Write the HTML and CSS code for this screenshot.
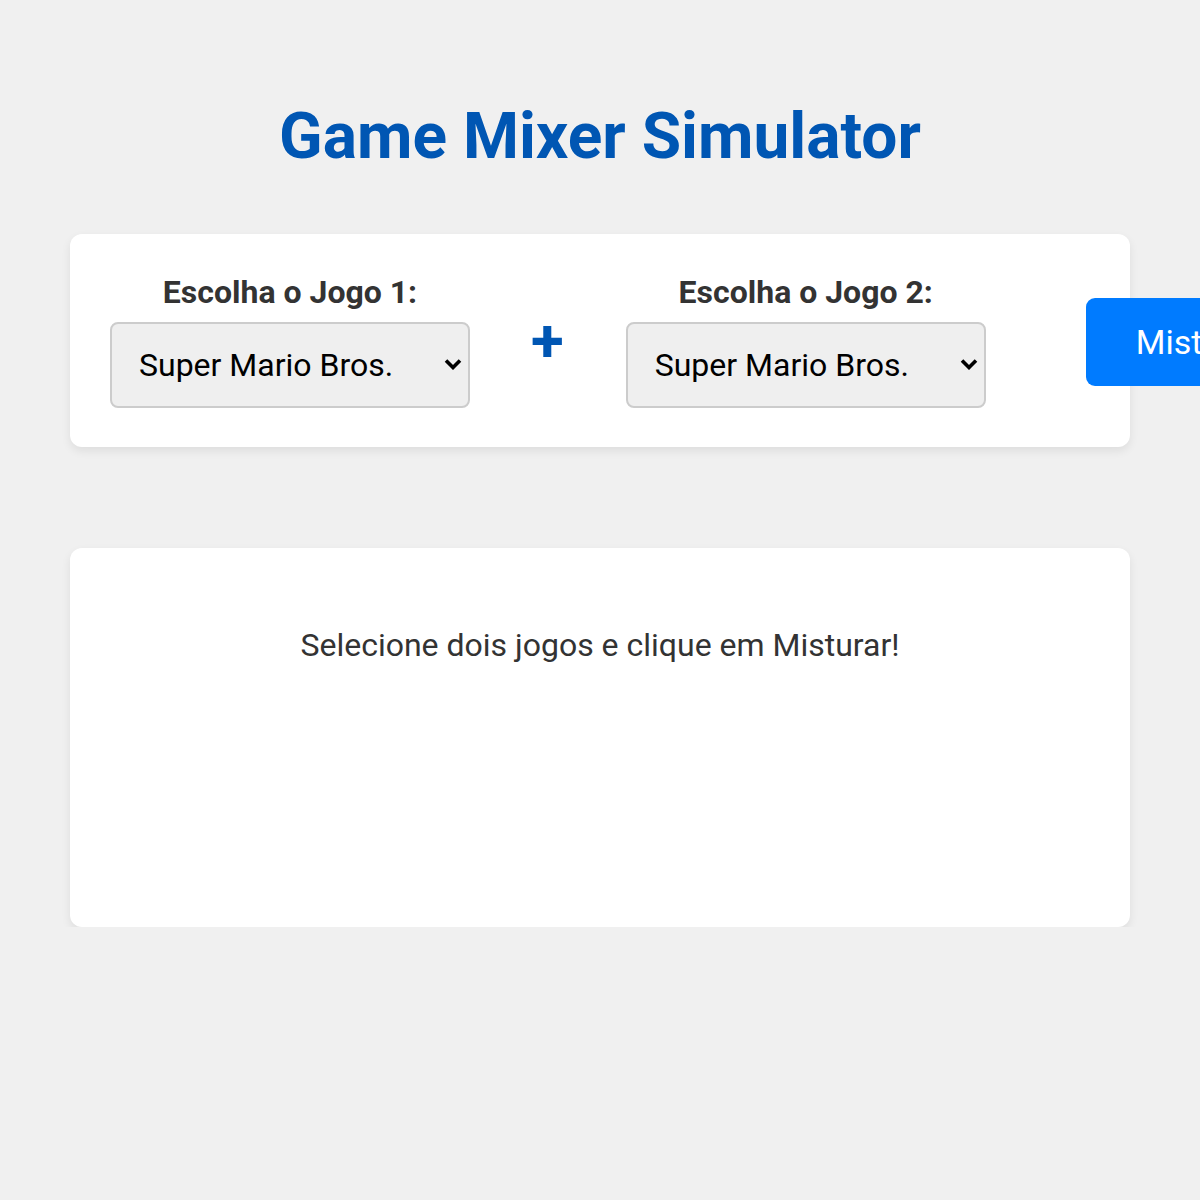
FILE: index.html
```
<!DOCTYPE html>
<html lang="pt">
<head>
<meta charset="utf-8">
<title>Game Mixer Simulator</title>
<link rel="stylesheet" href="styles.css">
</head>
<body>
<div class="container">
  <h1 class="title">Game Mixer Simulator</h1>
  <div class="card mixer">
    <div class="group">
      <label class="label" for="g1">Escolha o Jogo 1:</label>
      <div class="select-wrap">
        <select class="select" id="g1">
          <option>Super Mario Bros.</option>
          <option>The Legend of Zelda</option>
        </select>
        <svg class="chevron" width="18" height="12" viewBox="0 0 18 12" aria-hidden="true"><path d="M2 2.5 L9 9.5 L16 2.5" fill="none" stroke="#000" stroke-width="3.6"/></svg>
      </div>
    </div>
    <div class="plus">+</div>
    <div class="group">
      <label class="label" for="g2">Escolha o Jogo 2:</label>
      <div class="select-wrap">
        <select class="select" id="g2">
          <option>Super Mario Bros.</option>
          <option>The Legend of Zelda</option>
        </select>
        <svg class="chevron" width="18" height="12" viewBox="0 0 18 12" aria-hidden="true"><path d="M2 2.5 L9 9.5 L16 2.5" fill="none" stroke="#000" stroke-width="3.6"/></svg>
      </div>
    </div>
    <button class="mix-btn">Misturar</button>
  </div>
  <div class="card result">
    <p class="result-text">Selecione dois jogos e clique em Misturar!</p>
  </div>
</div>
</body>
</html>
```
FILE: styles.css
```
html, body {
  margin: 0;
  padding: 0;
}
body {
  background: #f0f0f0;
  font-family: Roboto, "Liberation Sans", sans-serif;
  color: #333;
  overflow: hidden;
}
.container {
  width: 1060px;
  margin: 0 auto;
  padding-top: 99px;
}
.title {
  margin: 0 0 60px;
  text-align: center;
  color: #0056b3;
  font-size: 64px;
  font-weight: 700;
  line-height: 75px;
}
.card {
  background: #fff;
  border-radius: 12px;
  box-shadow: 0 4px 10px rgba(0, 0, 0, 0.08);
}
.mixer {
  height: 213px;
  box-sizing: border-box;
  padding: 0 40px;
  display: flex;
  align-items: center;
  gap: 62px;
}
.group {
  display: flex;
  flex-direction: column;
  align-items: center;
  gap: 10px;
  flex: none;
}
.label {
  font-size: 32px;
  font-weight: 700;
  color: #333;
  line-height: 36px;
}
.select-wrap {
  position: relative;
  width: 360px;
  height: 86px;
  margin-top: 2px;
}
.select {
  -webkit-appearance: none;
  appearance: none;
  width: 360px;
  height: 86px;
  box-sizing: border-box;
  font-family: Roboto, "Liberation Sans", sans-serif;
  font-size: 32px;
  color: #000;
  background: #efefef;
  border: 2px solid #ccc;
  border-radius: 8px;
  padding: 0 40px 0 27px;
  margin: 0;
}
.chevron {
  position: absolute;
  right: 8px;
  top: 36px;
  pointer-events: none;
}
.plus {
  font-size: 60px;
  font-weight: 700;
  color: #0056b3;
  flex: none;
  line-height: 60px;
  margin-left: -1px;
}
.mix-btn {
  flex: none;
  margin-left: 38px;
  width: 200px;
  height: 88px;
  border: none;
  border-radius: 9px;
  background: #007bff;
  color: #fff;
  font-family: Roboto, "Liberation Sans", sans-serif;
  font-size: 34px;
  padding: 0 0 0 50px;
  text-align: left;
  margin-top: 2px;
}
.result {
  margin-top: 101px;
  height: 379px;
  box-sizing: border-box;
  padding-top: 78px;
}
.result-text {
  margin: 0;
  text-align: center;
  font-size: 32px;
  color: #333;
}
```
